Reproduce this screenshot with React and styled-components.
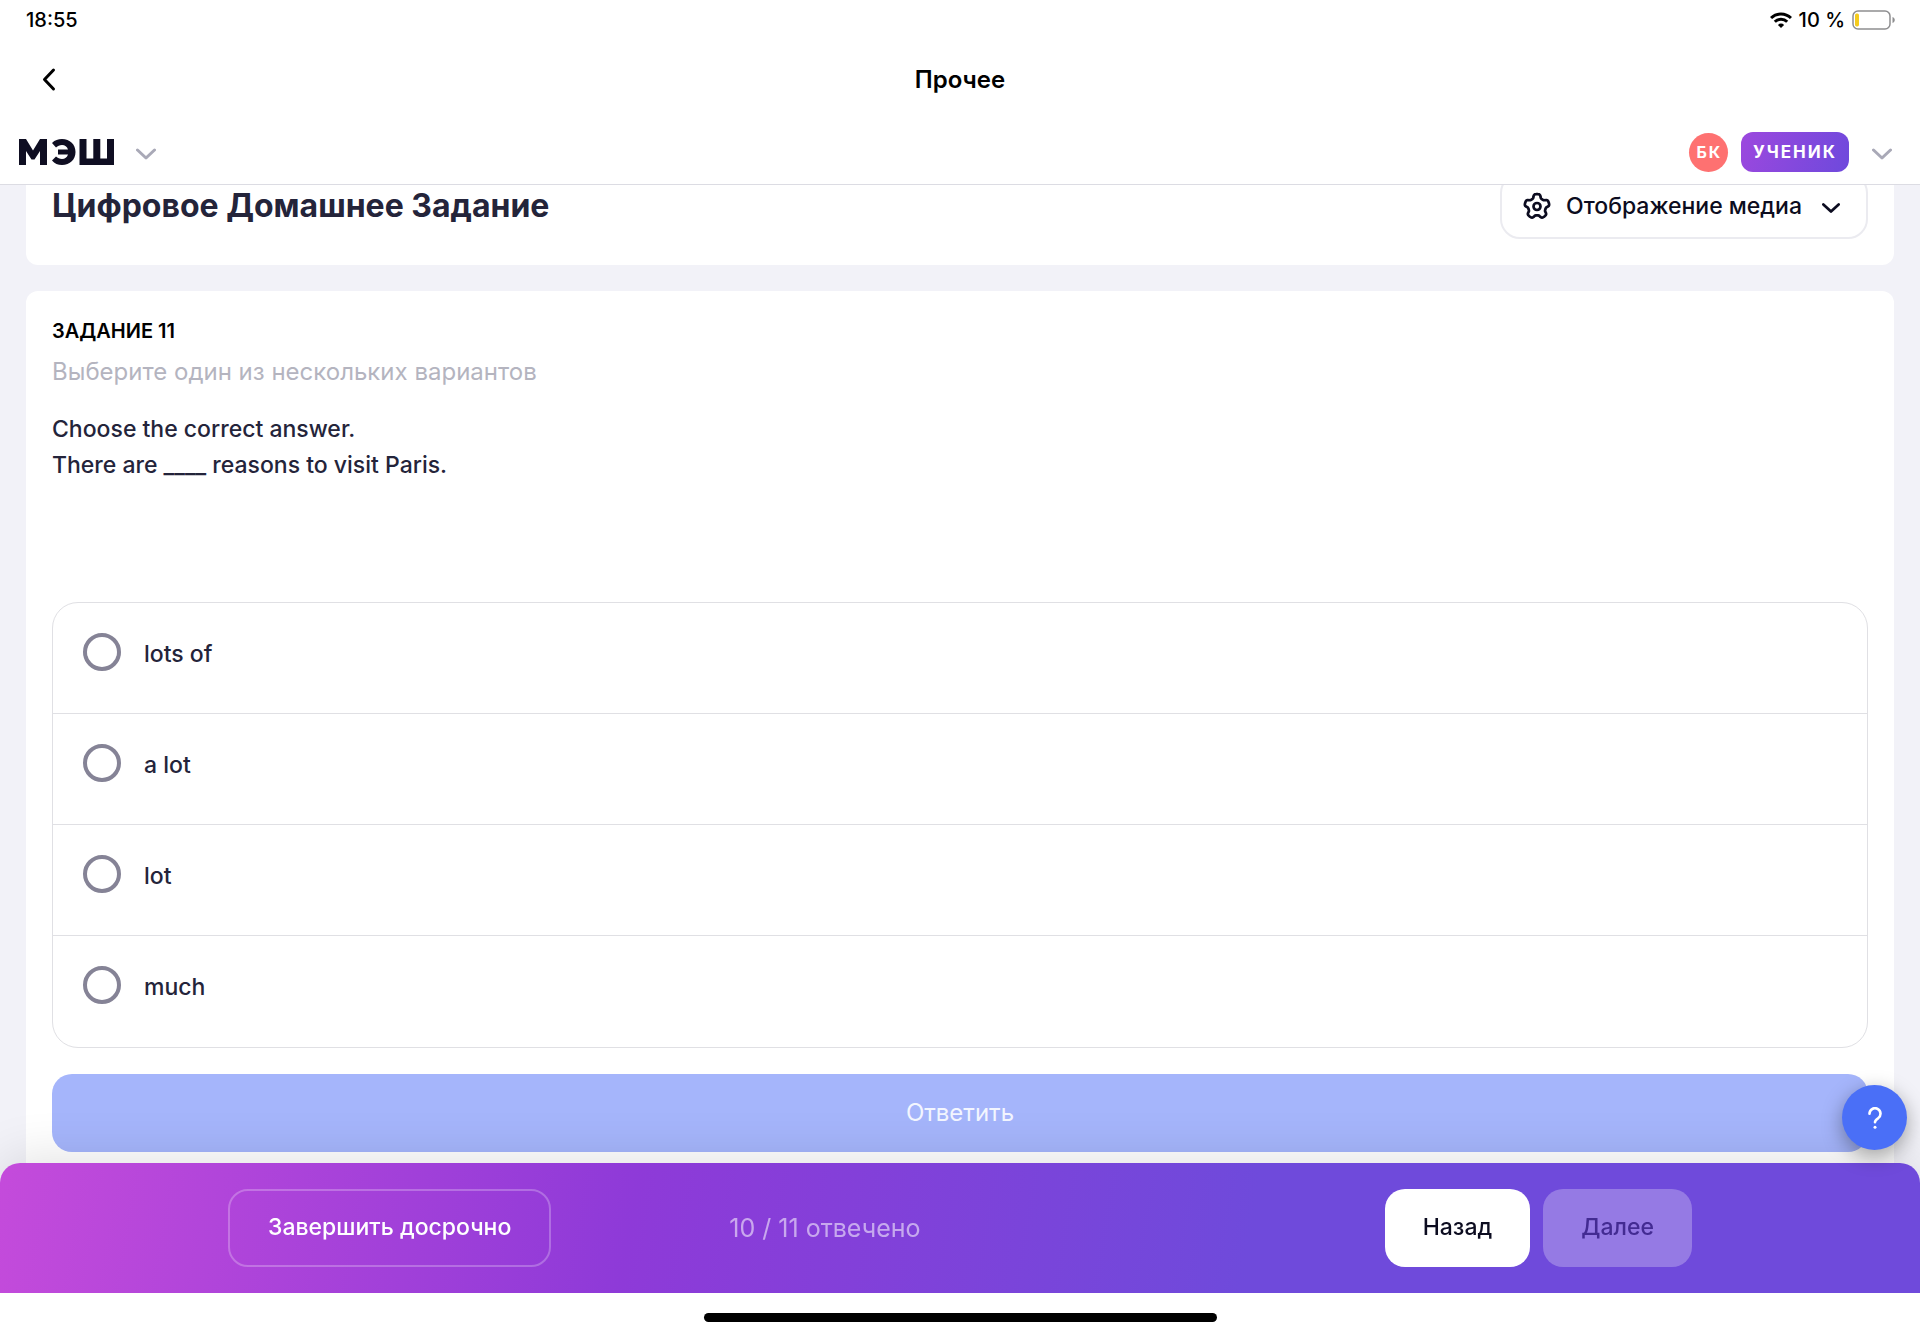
import React, { useLayoutEffect, useRef, useState } from "react";
import styled, { createGlobalStyle } from "styled-components";

const Global = createGlobalStyle`
  * { box-sizing: border-box; }
  body { margin: 0; background: #fff; font-family: Inter, "Liberation Sans", sans-serif; color: #24243a; }
  h1, h2, p, fieldset, legend { margin: 0; padding: 0; border: 0; }
  button { font-family: inherit; margin: 0; cursor: pointer; }
`;

const Page = styled.div`
  display: flex;
  flex-direction: column;
  height: 100vh;
  background: #fff;
`;

const StatusBar = styled.div`
  display: flex;
  justify-content: space-between;
  align-items: center;
  height: 39px;
  padding: 0 24px 0 26px;
  font-size: 20px;
  font-weight: 500;
  line-height: 24px;
  color: #000;
`;

const StatusGroup = styled.div`
  display: flex;
  align-items: center;
  gap: 7px;
`;

const NavBar = styled.nav`
  display: grid;
  grid-template-columns: 1fr auto 1fr;
  align-items: center;
  height: 81px;
  padding: 0 32px;
`;

const NavTitle = styled.p`
  font-size: 24px;
  font-weight: 600;
  line-height: 32px;
  color: #000;
`;

const IconButton = styled.button`
  display: inline-flex;
  align-items: center;
  justify-self: start;
  padding: 0;
  border: 0;
  background: none;
  color: ${(p) => p.$color || "#000"};
`;

const AppHeader = styled.header`
  display: flex;
  align-items: center;
  justify-content: space-between;
  height: 65px;
  padding: 0 28px 0 19px;
  border-bottom: 1px solid #dcdce3;
`;

const HeaderGroup = styled.div`
  display: flex;
  align-items: center;
  gap: ${(p) => p.$gap};
`;

const Avatar = styled.span`
  display: flex;
  align-items: center;
  justify-content: center;
  width: 39px;
  height: 39px;
  padding-left: 2px;
  border-radius: 50%;
  background: #fe7171;
  color: #fff;
  font-size: 16px;
  font-weight: 700;
  letter-spacing: 2px;
`;

const Role = styled.span`
  display: flex;
  align-items: center;
  height: 40px;
  padding: 0 12px;
  margin-right: 10px;
  border-radius: 12px;
  background: linear-gradient(110deg, #9c48de, #6e49dc);
  color: #fff;
  font-size: 17px;
  font-weight: 700;
  letter-spacing: 2px;
`;

const Scroller = styled.main`
  flex: 1;
  min-height: 0;
  overflow: hidden auto;
  scrollbar-width: none;
  background: #f2f2f8;
`;

const Content = styled.div`
  display: flex;
  flex-direction: column;
  gap: 26px;
  padding: 0 26px 72px;
`;

const Card = styled.section`
  padding: 26px;
  border-radius: 12px;
  background: #fff;
`;

const TitleCard = styled(Card)`
  display: flex;
  align-items: center;
  justify-content: space-between;
`;

const Title = styled.h1`
  font-size: 32px;
  font-weight: 700;
  line-height: 40px;
`;

const MediaButton = styled.button`
  display: flex;
  align-items: center;
  height: 66px;
  padding: 0 26px 0 20px;
  border: 2px solid #ebebf0;
  border-radius: 20px;
  background: #fff;
  color: #0c0c20;
  font-size: 23px;
  font-weight: 500;
`;

const MediaLabel = styled.span`
  margin: 0 20px 0 14px;
`;

const TaskNumber = styled.h2`
  font-size: 20px;
  font-weight: 600;
  line-height: 28px;
  text-transform: uppercase;
  color: #000;
`;

const TaskHint = styled.p`
  padding-top: 11px;
  font-size: 24px;
  font-weight: 400;
  line-height: 32px;
  color: #b4b4bf;
`;

const Question = styled.p`
  padding-top: 23px;
  font-size: 23px;
  font-weight: 500;
  line-height: 36px;
`;

const Options = styled.fieldset`
  margin-top: 119px;
  border: 1px solid #e0e0e4;
  border-radius: 26px;
`;

const Option = styled.label`
  display: flex;
  align-items: flex-start;
  gap: 23px;
  height: 111px;
  padding: 30px;
  border-bottom: 1px solid #e0e0e4;
  font-size: 23px;
  font-weight: 500;
  line-height: 42px;
  cursor: pointer;

  &:last-child {
    border-bottom: 0;
  }
`;

const Radio = styled.input`
  appearance: none;
  flex: none;
  width: 38px;
  height: 38px;
  margin: 0;
  border: 4px solid #858396;
  border-radius: 50%;
  background: #fff;

  &:checked {
    border-width: 12px;
    border-color: #4a6ff7;
  }
`;

const AnswerButton = styled.button`
  display: block;
  width: 100%;
  height: 78px;
  margin-top: 26px;
  padding: 0 0 2px;
  border: 0;
  border-radius: 20px;
  background: #a5b5fb;
  color: #f3f6ff;
  font-size: 24px;
  font-weight: 400;
`;

const Footer = styled.footer`
  position: relative;
  display: flex;
  align-items: center;
  height: 130px;
  margin-top: -20px;
  padding: 0 228px;
  border-radius: 20px 20px 0 0;
  background: linear-gradient(100deg, #c44bdb 0%, #8e3ad8 33%, #6f4adb 65%, #6f4adb 100%);
  box-shadow: 0 -4px 52px rgba(0, 0, 0, 0.12);
`;

const FooterButton = styled.button`
  height: 78px;
  padding: 0 38px 2px;
  border: 0;
  border-radius: 20px;
  font-size: 23px;
  font-weight: 500;
  white-space: nowrap;
`;

const OutlineButton = styled(FooterButton)`
  border: 2px solid rgba(255, 255, 255, 0.25);
  background: transparent;
  color: #fff;
`;

const SolidButton = styled(FooterButton)`
  background: #fff;
  color: #0c0c20;
`;

const DimButton = styled(FooterButton)`
  background: #957ae4;
  color: #432b92;
`;

const Counter = styled.p`
  margin-left: 178px;
  font-size: 25px;
  font-weight: 400;
  line-height: 32px;
  color: rgba(255, 255, 255, 0.55);
`;

const Pager = styled.div`
  display: flex;
  gap: 13px;
  margin-left: auto;
`;

const HelpButton = styled.button`
  position: absolute;
  right: 13px;
  bottom: 143px;
  display: flex;
  align-items: center;
  justify-content: center;
  width: 65px;
  height: 65px;
  padding: 0;
  border: 0;
  border-radius: 50%;
  background: #4a6ff7;
  color: #fff;
  box-shadow: 0 6px 20px rgba(0, 0, 0, 0.35);
`;

const HomeArea = styled.div`
  display: flex;
  justify-content: center;
  align-items: center;
  height: 41px;
  padding-top: 8px;
  background: #fff;
  z-index: 1;
`;

const HomeIndicator = styled.div`
  width: 513px;
  height: 9px;
  border-radius: 5px;
  background: #000;
`;

const Chevron = ({ width, stroke = 3 }) => (
  <svg width={width} height={width * 0.8} viewBox="0 0 20 16" fill="none" stroke="currentColor" strokeWidth={stroke} strokeLinecap="round" strokeLinejoin="round" aria-hidden="true">
    <path d="M1.500 6L10 14l8.500-8" />
  </svg>
);

const BackIcon = () => (
  <svg width="32" height="32" viewBox="0 0 32 32" fill="none" stroke="currentColor" strokeWidth="3" strokeLinecap="round" strokeLinejoin="round" aria-hidden="true">
    <path d="M21.500 6L12.500 15.500l9 9.500" />
  </svg>
);

const Logo = () => (
  <svg width="95" height="26" viewBox="0 0 95 26" fill="#0f0e22" role="img" aria-label="МЭШ">
    <path d="M0 26V0h7l7 11.500L21 0h7v26h-7V12l-5.500 8.500h-3L7 12v14z" />
    <path d="M33 4c3-3 6-4 10-4 8 0 13.500 5.500 13.500 13S51 26 43 26c-4 0-7.500-1.500-10-4.500l4-4c1.800 1.600 3.500 2.500 6 2.500 3 0 5-1.700 6-4.500H39v-5h10C48 7.500 46 6 43 6c-2.500 0-4.200 1-6 2.500z" />
    <path d="M60.500 0h7v19.500h6.800V0h7v19.500H88V0h7v26H60.500z" />
  </svg>
);

const WifiIcon = () => (
  <svg width="22" height="16" viewBox="0 0 22 16" fill="none" stroke="#000" strokeWidth="3" aria-hidden="true">
    <path d="M1 6a14.200 14.200 0 0 1 20 0" />
    <path d="M4.800 9.800a8.800 8.800 0 0 1 12.400 0" />
    <path d="M11 16L7.900 12.900a4.400 4.400 0 0 1 6.200 0z" fill="#000" stroke="none" />
  </svg>
);

const BatteryIcon = () => (
  <svg width="44" height="20" viewBox="0 0 44 20" fill="none" aria-hidden="true">
    <rect x="1" y="1" width="37" height="18" rx="5" stroke="#8e8e90" strokeWidth="1.500" />
    <rect x="3" y="3.500" width="4" height="13" rx="1.700" fill="#f5cb1c" />
    <path d="M40.500 7c3 1 3 5 0 6z" fill="#8e8e90" />
  </svg>
);

// Five-lobed gear outline: the radius swells once per lobe, with flattened tops.
const gearPoints = Array.from({ length: 120 }, (_, i) => {
  const a = (i / 120) * Math.PI * 2;
  const r = 10.6 + 1.8 * Math.tanh(2.2 * (Math.cos(5 * a) + 0.1));
  return `${(15 + r * Math.sin(a)).toFixed(2)},${(15.5 - r * Math.cos(a)).toFixed(2)}`;
}).join(" ");

const GearIcon = () => (
  <svg width="30" height="30" viewBox="0 0 30 30" fill="none" stroke="currentColor" strokeWidth="2.700" strokeLinejoin="round" aria-hidden="true">
    <polygon points={gearPoints} />
    <circle cx="15" cy="15.500" r="3.500" />
  </svg>
);

const HelpIcon = () => (
  <svg width="14" height="22" viewBox="0 0 14 22" fill="none" stroke="currentColor" strokeWidth="2.600" strokeLinecap="round" aria-hidden="true">
    <path d="M1.500 6.800a5.500 5.500 0 1 1 8.600 4.500c-2 1.300-3.100 2-3.100 4" />
    <circle cx="7" cy="20.300" r="1.500" fill="currentColor" stroke="none" />
  </svg>
);

const answers = ["lots of", "a lot", "lot", "much"];
const INITIAL_SCROLL = 38;

export default function App() {
  const scroller = useRef(null);
  const [choice, setChoice] = useState(null);

  useLayoutEffect(() => {
    scroller.current.scrollTop = INITIAL_SCROLL;
  }, []);

  return (
    <Page>
      <Global />
      <StatusBar>
        <span>18:55</span>
        <StatusGroup>
          <WifiIcon />
          <span>10 %</span>
          <BatteryIcon />
        </StatusGroup>
      </StatusBar>
      <NavBar>
        <IconButton type="button" aria-label="Назад"><BackIcon /></IconButton>
        <NavTitle>Прочее</NavTitle>
      </NavBar>
      <AppHeader>
        <HeaderGroup $gap="22px">
          <Logo />
          <IconButton type="button" $color="#a9a9b7" aria-label="Меню"><Chevron width={20} /></IconButton>
        </HeaderGroup>
        <HeaderGroup $gap="13px">
          <Avatar>БК</Avatar>
          <Role>УЧЕНИК</Role>
          <IconButton type="button" $color="#a9a9b7" aria-label="Профиль"><Chevron width={20} /></IconButton>
        </HeaderGroup>
      </AppHeader>
      <Scroller ref={scroller}>
        <Content>
          <TitleCard>
            <Title>Цифровое Домашнее Задание</Title>
            <MediaButton type="button">
              <GearIcon />
              <MediaLabel>Отображение медиа</MediaLabel>
              <Chevron width={18} stroke={3} />
            </MediaButton>
          </TitleCard>
          <Card>
            <TaskNumber>Задание 11</TaskNumber>
            <TaskHint>Выберите один из нескольких вариантов</TaskHint>
            <Question>
              Choose the correct answer.
              <br />
              There are ____ reasons to visit Paris.
            </Question>
            <Options aria-label="Варианты ответа">
              {answers.map((text, i) => (
                <Option key={text}>
                  <Radio type="radio" name="answer" value={text} checked={choice === i} onChange={() => setChoice(i)} />
                  {text}
                </Option>
              ))}
            </Options>
            <AnswerButton type="button">Ответить</AnswerButton>
          </Card>
        </Content>
      </Scroller>
      <Footer>
        <OutlineButton type="button">Завершить досрочно</OutlineButton>
        <Counter>10 / 11 отвечено</Counter>
        <Pager>
          <SolidButton type="button">Назад</SolidButton>
          <DimButton type="button" disabled>Далее</DimButton>
        </Pager>
        <HelpButton type="button" aria-label="Помощь"><HelpIcon /></HelpButton>
      </Footer>
      <HomeArea><HomeIndicator /></HomeArea>
    </Page>
  );
}
